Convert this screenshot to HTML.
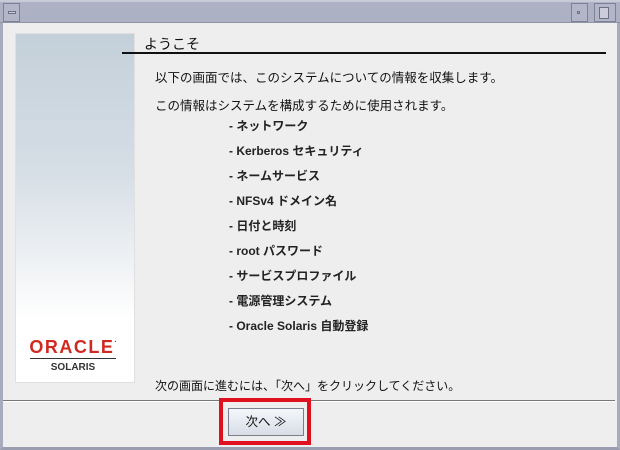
<!DOCTYPE html>
<html><head><meta charset="utf-8"><style>
*{margin:0;padding:0;box-sizing:border-box}
body{width:620px;height:450px;background:#eeeeee;position:relative;overflow:hidden;font-family:"Liberation Sans","Noto Sans CJK JP",sans-serif;font-size:12.5px;color:#111}
.a{position:absolute}
</style></head><body>
<div class="a" style="left:0;top:0;width:620px;height:450px;border-left:3px solid #a8abbc;border-right:3px solid #a8abbc;border-bottom:3px solid #9a9db0"></div>
<div class="a" style="left:0;top:0;width:620px;height:23px;background:#adb1c4;border-bottom:1px solid #8f93a6;border-top:2px solid #c8cbd8"></div>
<div class="a" style="left:3px;top:3px;width:17px;height:19px;border:1px solid #7e8296;background:#b3b6c8"></div>
<div class="a" style="left:8px;top:11px;width:8px;height:3px;border:1px solid #6d7083;background:#ccd"></div>
<div class="a" style="left:571px;top:3px;width:17px;height:19px;border:1px solid #7e8296;background:#b3b6c8"></div>
<div class="a" style="left:577px;top:11px;width:3px;height:3px;border:1px solid #6d7083"></div>
<div class="a" style="left:594px;top:3px;width:22px;height:19px;border:1px solid #7e8296;background:#b3b6c8"></div>
<div class="a" style="left:599px;top:7px;width:10px;height:12px;border:1px solid #6d7083;background:#ccd"></div>

<div class="a" style="left:15px;top:33px;width:120px;height:350px;background:linear-gradient(#c4d0d9 0%,#d6dee6 40%,#eef1f4 65%,#fff 82%,#fff 100%);border:1px solid #e0e0e0"></div>
<div class="a" style="left:26px;top:337px;width:96px;text-align:center;color:#d02a20;font-weight:bold;font-size:18px;letter-spacing:1.5px">ORACLE<span style="font-size:8px;vertical-align:top">·</span></div>
<div class="a" style="left:30px;top:358px;width:86px;height:1px;background:#333"></div>
<div class="a" style="left:30px;top:362px;width:86px;text-align:center;font-weight:bold;font-size:10px;color:#333">SOLARIS</div>

<div class="a" style="left:144px;top:34px;font-size:14px">ようこそ</div>
<div class="a" style="left:122px;top:52px;width:484px;height:2px;background:#111"></div>
<div class="a" style="left:155px;top:67px">以下の画面では、このシステムについての情報を収集します。</div>
<div class="a" style="left:155px;top:95px">この情報はシステムを構成するために使用されます。</div>
<div class="a" style="left:229px;top:114px;line-height:25px;font-weight:bold;font-size:12px;color:#222">- ネットワーク<br>- Kerberos セキュリティ<br>- ネームサービス<br>- NFSv4 ドメイン名<br>- 日付と時刻<br>- root パスワード<br>- サービスプロファイル<br>- 電源管理システム<br>- Oracle Solaris 自動登録</div>
<div class="a" style="left:155px;top:377px;font-size:12px">次の画面に進むには、「次へ」をクリックしてください。</div>
<div class="a" style="left:3px;top:400px;width:612px;height:1px;background:#777"></div>
<div class="a" style="left:3px;top:401px;width:612px;height:1px;background:#fff"></div>
<div class="a" style="left:219px;top:398px;width:92px;height:47px;border:4px solid #e01020"></div>
<div class="a" style="left:228px;top:408px;width:76px;height:28px;border:1px solid #7a8090;background:linear-gradient(#f4f6fa,#d8dde6);text-align:center;line-height:26px;font-size:12.5px">次へ ≫</div>
</body></html>
